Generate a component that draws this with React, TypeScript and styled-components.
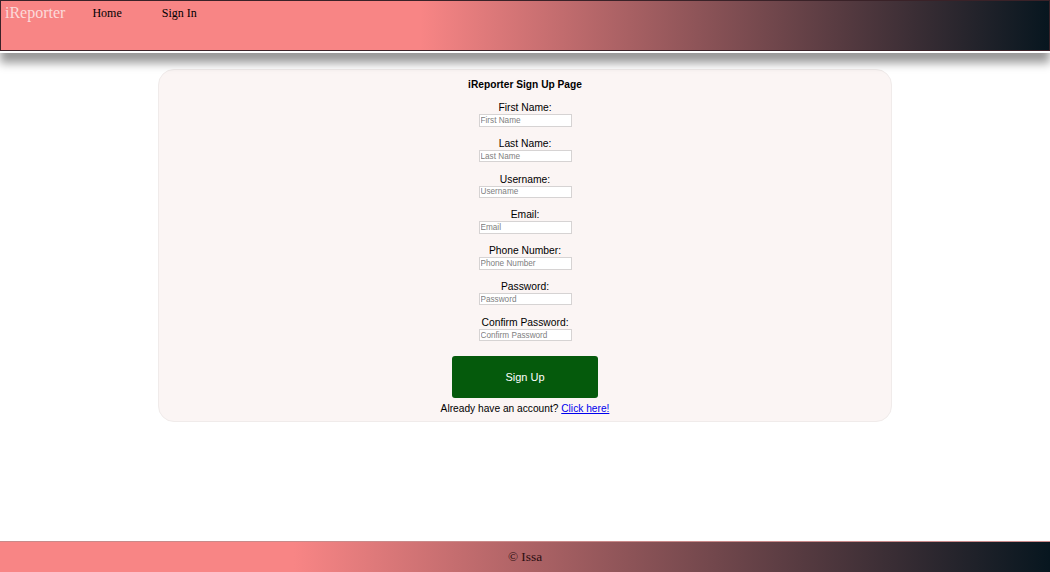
import React from "react";
import styled, { createGlobalStyle } from "styled-components";

const GlobalStyle = createGlobalStyle`
  html, body { margin: 0; padding: 0; background: #ffffff; }
  body { font-family: "Liberation Sans", Arial, sans-serif; }
  * { box-sizing: border-box; }
`;

const Page = styled.div`
  min-height: 100vh;
  display: flex;
  flex-direction: column;
`;

const Header = styled.header`
  height: 51px;
  border: 1px solid #3a2228;
  background: linear-gradient(to right, #f88585 40%, #07161f 100%);
  box-shadow: 0 0 0 2px #ffffff, 0 12px 9px 0 rgba(0, 0, 0, 0.4);
  display: flex;
  align-items: flex-start;
  padding: 2px 0 0 4px;
  position: relative;
  z-index: 1;
`;

const Logo = styled.a`
  font-family: "Liberation Serif", "Times New Roman", serif;
  font-size: 16px;
  line-height: 19px;
  color: #fcdada;
  text-decoration: none;
  margin-right: 27px;
`;

const NavLink = styled.a<{ $gap?: number }>`
  font-family: "Liberation Serif", "Times New Roman", serif;
  font-size: 12px;
  line-height: 16px;
  margin-top: 2px;
  color: #000;
  text-decoration: none;
  margin-right: ${(p) => p.$gap ?? 0}px;
`;

const Main = styled.main`
  flex: 1;
  padding-top: 18px;
`;

const Card = styled.section`
  width: 734px;
  margin: 0 auto;
  background: #fbf5f4;
  border: 1px solid #f0ebea;
  border-radius: 16px;
  padding: 8px 0 6px;
  display: flex;
  flex-direction: column;
  align-items: center;
`;

const Title = styled.h1`
  margin: 0 0 11px;
  font-size: 10.2px;
  line-height: 13px;
  font-weight: bold;
  color: #000;
`;

const Field = styled.div`
  display: flex;
  flex-direction: column;
  align-items: center;
  margin-bottom: 11.3px;
`;

const Label = styled.label`
  font-size: 10.3px;
  line-height: 12px;
  color: #000;
`;

const Input = styled.input`
  width: 93px;
  height: 12.5px;
  padding: 0 1px;
  border: 1px solid #d6d3d3;
  background: #ffffff;
  font-family: "Liberation Sans", Arial, sans-serif;
  font-size: 8.2px;
  outline: none;
  &::placeholder { color: #808080; }
`;

const Button = styled.button`
  margin-top: 3px;
  width: 146px;
  height: 42px;
  border: none;
  border-radius: 3px;
  background: #055a0c;
  color: #ffffff;
  font-family: "Liberation Sans", Arial, sans-serif;
  font-size: 11px;
  cursor: pointer;
`;

const Already = styled.p`
  margin: 4px 0 0;
  font-size: 10.2px;
  line-height: 13px;
  color: #000;
`;

const Link = styled.a`
  color: #0000ee;
  text-decoration: underline;
`;

const Footer = styled.footer`
  height: 31px;
  border-top: 1px solid #c98a8a;
  background: linear-gradient(to right, #f88585 28%, #07161f 100%);
  display: flex;
  align-items: center;
  justify-content: center;
  font-family: "Liberation Serif", "Times New Roman", serif;
  font-size: 13.3px;
  color: #2a0d10;
`;

const fields = [
  "First Name",
  "Last Name",
  "Username",
  "Email",
  "Phone Number",
  "Password",
  "Confirm Password",
];

export default function App() {
  return (
    <Page>
      <GlobalStyle />
      <Header>
        <Logo href="#">iReporter</Logo>
        <NavLink href="#" $gap={40}>Home</NavLink>
        <NavLink href="#">Sign In</NavLink>
      </Header>
      <Main>
        <Card>
          <Title>iReporter Sign Up Page</Title>
          {fields.map((f) => (
            <Field key={f}>
              <Label>{f}:</Label>
              <Input
                placeholder={f}
                type={f.includes("Password") ? "password" : "text"}
              />
            </Field>
          ))}
          <Button>Sign Up</Button>
          <Already>
            Already have an account? <Link href="#">Click here!</Link>
          </Already>
        </Card>
      </Main>
      <Footer>© Issa</Footer>
    </Page>
  );
}
